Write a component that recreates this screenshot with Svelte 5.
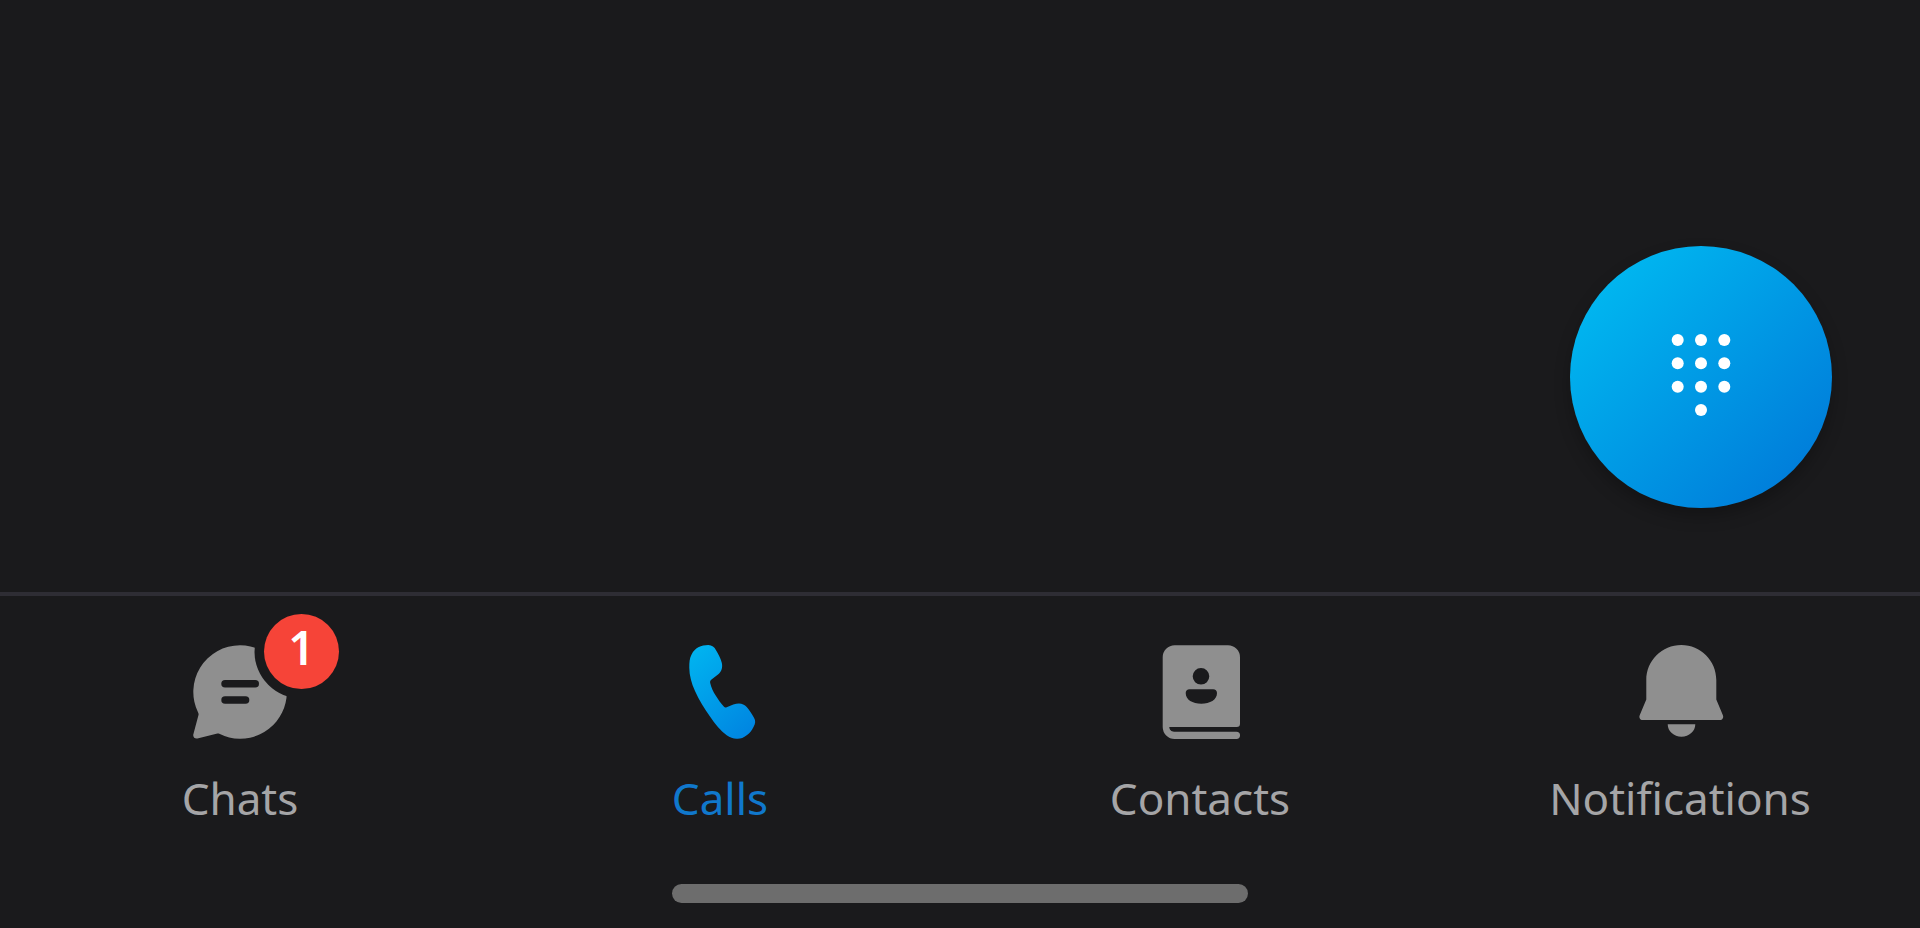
<script>
	// Tabs of the bottom bar, left to right
	const tabs = [
		{ id: 'chats', label: 'Chats', badge: 1 },
		{ id: 'calls', label: 'Calls' },
		{ id: 'contacts', label: 'Contacts' },
		{ id: 'notifications', label: 'Notifications' },
	]

	let active = $state('calls')

	// Dial pad: three full rows of keys and the single one below
	const keys = [
		[32.7, 19], [56, 19], [79.3, 19],
		[32.7, 42.3], [56, 42.3], [79.3, 42.3],
		[32.7, 65.7], [56, 65.7], [79.3, 65.7],
		[56, 89],
	]
</script>

<div class="screen">
	<main>
		<button class="dial" type="button" aria-label="Dial pad">
			<svg class="icon" viewBox="0 0 112 112" aria-hidden="true">
				{#each keys as [x, y]}
					<circle cx={x} cy={y} r="6" fill="#fff" />
				{/each}
			</svg>
		</button>
	</main>

	<nav>
		<div class="tabs">
			{#each tabs as tab (tab.id)}
				<button
					type="button"
					class="tab"
					class:active={active === tab.id}
					aria-current={active === tab.id ? 'page' : undefined}
					onclick={() => (active = tab.id)}
				>
					<span class="glyph">
						<svg class="icon" viewBox="0 0 112 112" aria-hidden="true">
							{#if tab.id === 'chats'}
								<mask id="bubble">
									<rect width="112" height="112" fill="#fff" />
									<circle cx="117.3" cy="15.7" r="46.8" fill="#000" />
									<rect x="37.3" y="44" width="37.7" height="7.5" rx="3.75" fill="#000" />
									<rect x="37.3" y="60.2" width="28" height="7.5" rx="3.75" fill="#000" />
								</mask>
								<path
									mask="url(#bubble)"
									d="M56 9.3a46.7 46.7 0 1 1-20.7 88.5c-.6-.3-1.2-.4-1.9-.2l-20 4.9c-2.5.6-4.6-1.5-4.1-4l5.2-19.6c.2-.7.1-1.2-.2-1.9A46.7 46.7 0 0 1 56 9.3z"
								/>
							{:else if tab.id === 'calls'}
								<linearGradient id="handset" gradientUnits="userSpaceOnUse" x1="20" y1="20" x2="92" y2="102">
									<stop offset="0" stop-color="#00b4f0" />
									<stop offset="1" stop-color="#0082e0" />
								</linearGradient>
								<path
									class="handset"
									d="M44.3 9C48 9.200 50.500 11 52 14.200 54.500 18.500 56.500 22 57.700 26.500 59 31.500 57.500 35.500 54.300 38.300L47.500 43.500C46.300 44.500 45.900 45.300 46.200 47 47.200 51.500 49 55.500 52 60 54.500 64 56.500 67 60 70.700 60.800 71.600 61.500 71.700 62.700 71.200L69.300 68.500C75 66.500 79.500 67.200 82.700 71 85.500 74.300 88 78 90 81.700 91.800 85 91.500 87.500 89.500 91 88 94 86 97 82.700 99.300 79.500 101.800 76.500 103 72.700 102.800 69 102.600 66 101.600 62.700 99.300 56.500 95 51 88 46 80.500 40.500 72.500 35 64.500 31 55 27.500 47 25.300 39.500 25.300 31.700 25.300 26.500 25.500 22 27.700 18.300 29.200 15.300 31.500 12.700 34.300 11.300 37.500 9.700 41 9 44.300 9z"
								/>
							{:else if tab.id === 'contacts'}
								<path
									fill-rule="evenodd"
									d="M30.7 9.3H84a12 12 0 0 1 12 12v66.400A3.300 3.300 0 0 1 92.700 91H25.300c0 2.600 2.100 4.700 4.700 4.700h62.400a3.650 3.650 0 0 1 0 7.300H30.700a12 12 0 0 1-12-12V21.300a12 12 0 0 1 12-12zM57 32a8.300 8.300 0 1 0 0 16.600A8.300 8.300 0 0 0 57 32zM45.500 53.300h23.700c2.200 0 3.800 1.600 3.800 3.800 0 7-7 10.600-15.700 10.600S41.700 64.100 41.700 57.100c0-2.200 1.600-3.800 3.800-3.800z"
								/>
							{:else}
								<path
									d="M57.3 9c19.300 0 35 15.600 35 35v19.500l6.600 15.700c1 2.400-.5 4.800-3 4.800H18.700c-2.500 0-4-2.400-3-4.800l6.600-15.700V44c0-19.400 15.700-35 35-35z"
								/>
								<path d="M43.7 88.300h27.600c0 7-6.200 12.400-13.800 12.400s-13.800-5.400-13.800-12.400z" />
							{/if}
						</svg>
						{#if tab.badge}
							<span class="badge">{tab.badge}</span>
						{/if}
					</span>
					<span class="label">{tab.label}</span>
				</button>
			{/each}
		</div>
		<div class="home"></div>
	</nav>
</div>

<style>
	:global(body) {
		background: #1a1a1c;
	}

	.screen {
		display: flex;
		flex-direction: column;
		min-height: 100vh;
		background: #1a1a1c;
		font-family: 'Noto Sans', sans-serif;
	}

	main {
		flex: 1;
		display: flex;
		justify-content: flex-end;
		align-items: flex-end;
		padding: 84px 88px;
	}

	button {
		margin: 0;
		padding: 0;
		border: 0;
		font: inherit;
		cursor: pointer;
	}

	.icon {
		display: block;
		width: 112px;
		height: 112px;
		fill: #8f8f8f;
	}

	.dial {
		display: grid;
		place-items: center;
		width: 262px;
		height: 262px;
		border-radius: 50%;
		background: linear-gradient(135deg, #00b7f0 12%, #007dda 88%);
		box-shadow: 0 8px 16px rgba(0, 0, 0, 0.25);
	}

	nav {
		padding-bottom: 25px;
		border-top: 4px solid #2e2d34;
	}

	.tabs {
		display: grid;
		grid-template-columns: repeat(4, 1fr);
	}

	.tab {
		display: flex;
		flex-direction: column;
		align-items: center;
		gap: 18px;
		padding: 40px 0 54px;
		background: none;
		color: #a5a5a7;
	}

	.tab.active {
		color: #1078cc;
	}

	.handset {
		fill: url(#handset);
	}

	.glyph {
		position: relative;
	}

	.badge {
		position: absolute;
		top: -22px;
		right: -43px;
		width: 75px;
		height: 75px;
		border-radius: 50%;
		background: #f64438;
		color: #fff;
		font-size: 46px;
		font-weight: 600;
		line-height: 66px;
		text-align: center;
	}

	.label {
		font-size: 44px;
		line-height: 64px;
		font-variant-ligatures: none;
	}

	.home {
		width: 30%;
		height: 19px;
		margin: 0 auto;
		border-radius: 10px;
		background: #6d6d6d;
	}
</style>
